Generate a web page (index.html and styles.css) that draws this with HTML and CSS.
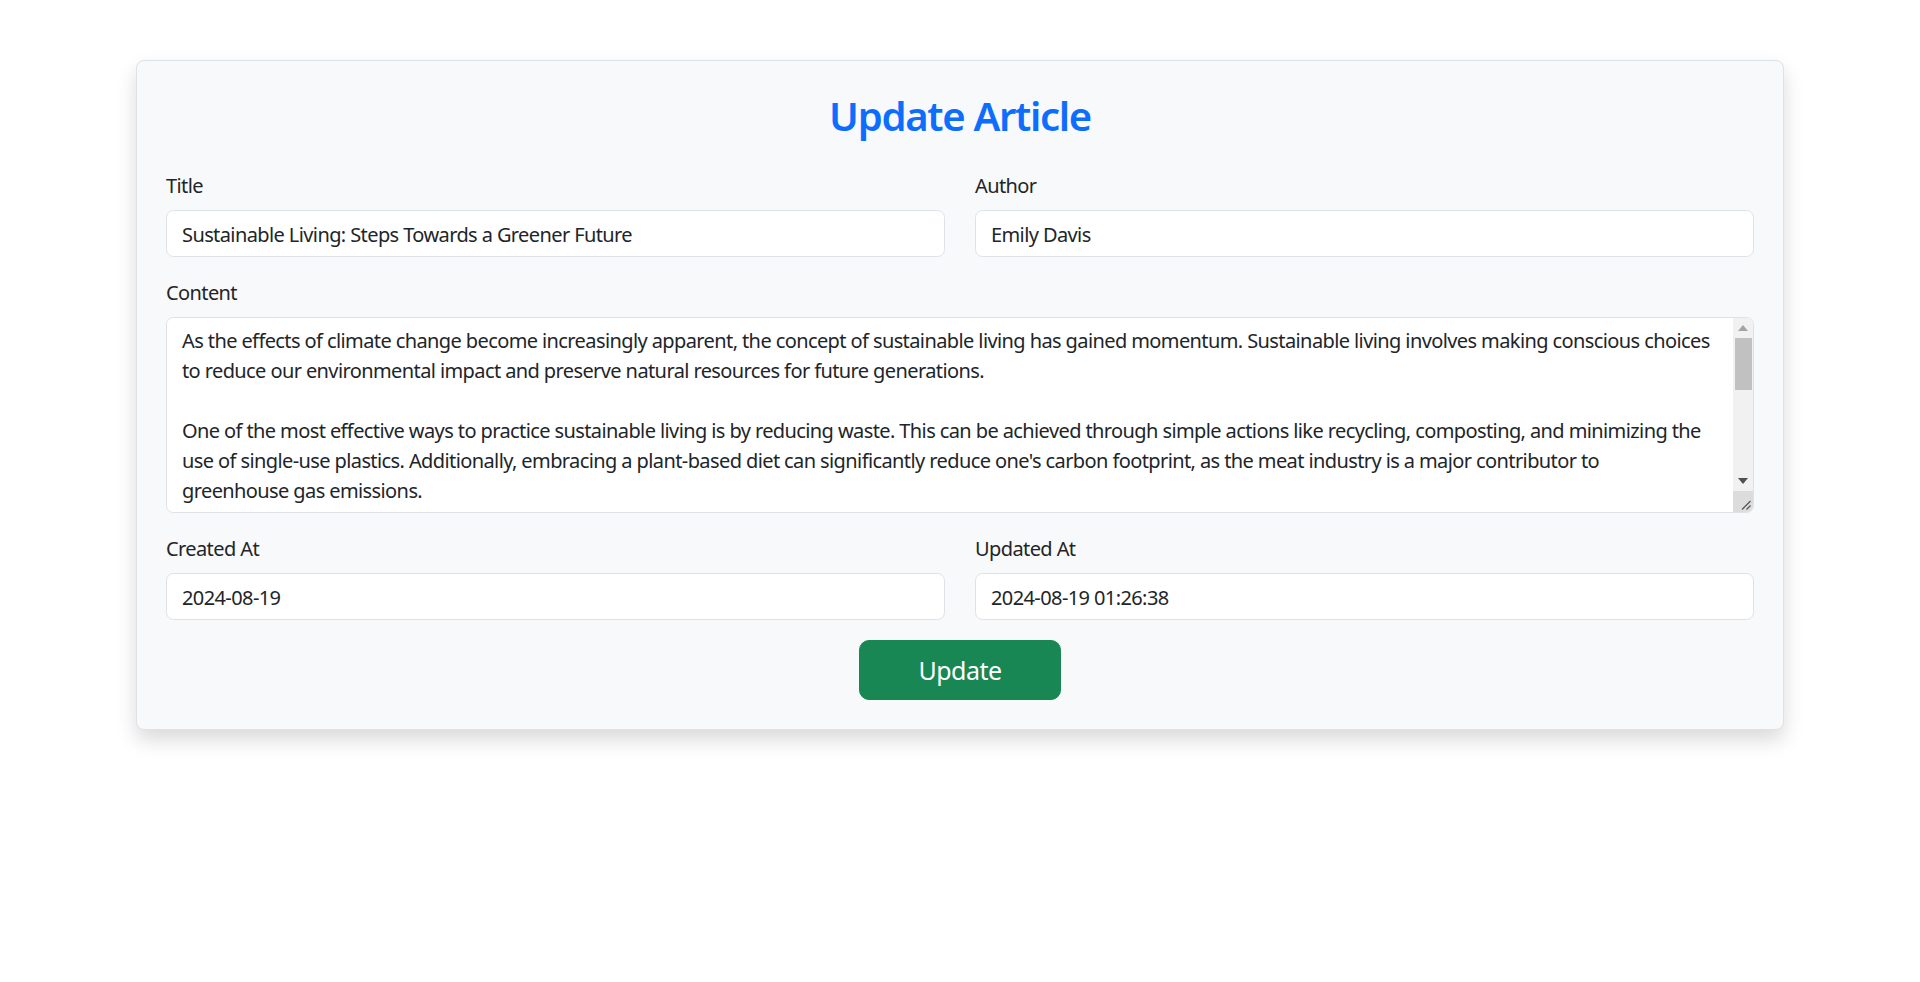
FILE: index.html
```html
<!DOCTYPE html>
<html lang="en">
<head>
<meta charset="utf-8">
<title>Update Article</title>
<link rel="stylesheet" href="styles.css">
</head>
<body>
<div class="container">
  <div class="card">
    <h2 class="card-title">Update Article</h2>
    <form class="form">
      <div class="row">
        <div class="field">
          <label class="label" for="title">Title</label>
          <input class="control" id="title" type="text" value="Sustainable Living: Steps Towards a Greener Future">
        </div>
        <div class="field">
          <label class="label" for="author">Author</label>
          <input class="control" id="author" type="text" value="Emily Davis">
        </div>
      </div>
      <div class="field">
        <label class="label" for="content">Content</label>
        <div class="textarea-wrap">
          <textarea class="control textarea" id="content">As the effects of climate change become increasingly apparent, the concept of sustainable living has gained momentum. Sustainable living involves making conscious choices to reduce our environmental impact and preserve natural resources for future generations.

One of the most effective ways to practice sustainable living is by reducing waste. This can be achieved through simple actions like recycling, composting, and minimizing the use of single-use plastics. Additionally, embracing a plant-based diet can significantly reduce one's carbon footprint, as the meat industry is a major contributor to
greenhouse gas emissions.

Energy conservation is another key aspect of sustainable living. Simple changes such as switching to LED light bulbs, unplugging electronics when they are not in use, and choosing public transportation, cycling or carpooling can make a significant difference.

Supporting local and sustainable businesses also helps reduce the carbon footprint associated with transporting goods over long distances.

By making these small changes in our daily lives, we can collectively contribute to a healthier planet and a greener future for generations to come.</textarea>
          <div class="scrollbar" aria-hidden="true">
            <div class="sb-button">
              <svg width="10" height="6" viewBox="0 0 10 6"><polygon points="0,6 5,0 10,6" fill="#a3a3a3"/></svg>
            </div>
            <div class="sb-track">
              <div class="sb-thumb"></div>
            </div>
            <div class="sb-button">
              <svg width="10" height="6" viewBox="0 0 10 6"><polygon points="0,0 10,0 5,6" fill="#505050"/></svg>
            </div>
          </div>
          <div class="resizer" aria-hidden="true">
            <svg width="12" height="12" viewBox="0 0 12 12"><path d="M11.5 3 L3 11.5 M11.5 7.5 L7.5 11.5" stroke="#555555" stroke-width="1.2" fill="none"/></svg>
          </div>
        </div>
      </div>
      <div class="row">
        <div class="field">
          <label class="label" for="created">Created At</label>
          <input class="control" id="created" type="text" value="2024-08-19">
        </div>
        <div class="field">
          <label class="label" for="updated">Updated At</label>
          <input class="control" id="updated" type="text" value="2024-08-19 01:26:38">
        </div>
      </div>
      <div class="actions">
        <button class="btn-update" type="submit">Update</button>
      </div>
    </form>
  </div>
</div>
</body>
</html>
```
FILE: styles.css
```css
html, body {
  margin: 0;
  padding: 0;
  background: #ffffff;
}

body {
  font-family: "Noto Sans", "Open Sans", sans-serif;
  font-size: 20px;
  line-height: 1.5;
  color: #212529;
  letter-spacing: -0.6px;
  padding-bottom: 40px;
}

.container {
  width: 1648px;
  margin: 60px auto 0;
}

.card {
  background: #f8f9fa;
  border: 1px solid #dee2e6;
  border-radius: 8px;
  box-shadow: 0 10px 20px rgba(0, 0, 0, 0.15);
  padding: 29px;
}

.card-title {
  margin: 2px 0 30px;
  font-size: 40px;
  line-height: 48px;
  font-weight: 600;
  color: #0d6efd;
  text-align: center;
  letter-spacing: -1.3px;
}

.form {
  margin: 0;
}

.row {
  display: grid;
  grid-template-columns: 1fr 1fr;
  column-gap: 30px;
}

.field {
  margin-bottom: 20px;
}

.label {
  display: block;
  padding-top: 1px;
  margin-bottom: 9px;
  line-height: 30px;
}

.control {
  display: block;
  width: 100%;
  box-sizing: border-box;
  height: 47px;
  padding: 8px 15px 6px;
  border: 1px solid #dee2e6;
  border-radius: 7.5px;
  background: #ffffff;
  color: #212529;
  font: inherit;
  letter-spacing: inherit;
  line-height: 30px;
  outline: none;
}

.textarea-wrap {
  position: relative;
}

.textarea {
  height: 196px;
  padding: 8px 35px 6px 15px;
  resize: none;
  overflow-y: auto;
}

.scrollbar {
  position: absolute;
  top: 1px;
  right: 1px;
  bottom: 22px;
  width: 20px;
  display: flex;
  flex-direction: column;
  background: #f1f1f1;
  border-top-right-radius: 6px;
}

.sb-button {
  height: 20px;
  flex: none;
  display: flex;
  align-items: center;
  justify-content: center;
}

.sb-button svg {
  display: block;
}

.sb-track {
  flex: 1;
  padding: 0 1px 0 2px;
}

.sb-thumb {
  height: 52px;
  background: #c1c1c1;
}

.resizer {
  position: absolute;
  right: 1px;
  bottom: 1px;
  width: 20px;
  height: 21px;
  background: #dcdcdc;
  display: flex;
  align-items: flex-end;
  justify-content: flex-end;
  border-bottom-right-radius: 6px;
}

.resizer svg {
  display: block;
  margin: 0 2px 2px 0;
}

.actions {
  display: flex;
  justify-content: center;
}

.btn-update {
  width: 202px;
  height: 60px;
  padding: 2px 0 0;
  border: 1px solid #198754;
  border-radius: 10px;
  background: #198754;
  color: #ffffff;
  font-family: inherit;
  font-size: 25px;
  letter-spacing: -0.5px;
  line-height: 1.5;
  cursor: pointer;
}
```
